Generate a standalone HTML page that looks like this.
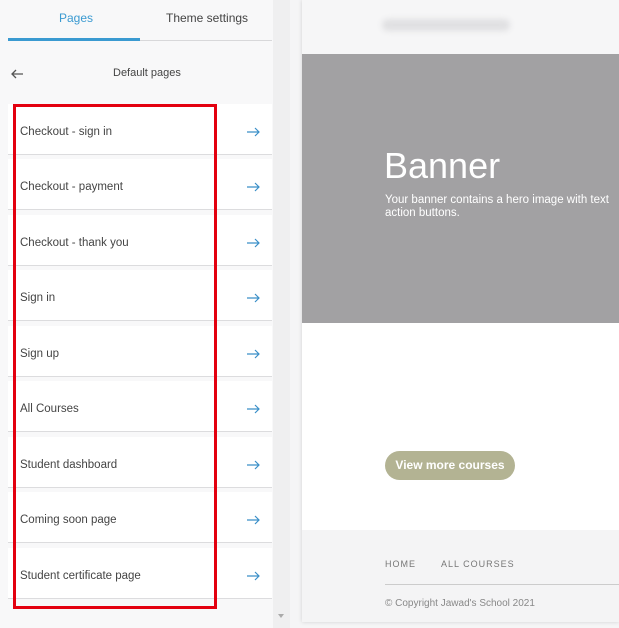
<!DOCTYPE html>
<html><head><style>
*{margin:0;padding:0;box-sizing:border-box}
body{width:619px;height:628px;overflow:hidden;background:#f5f5f6;font-family:"Liberation Sans",sans-serif;position:relative}
.left{position:absolute;left:0;top:0;width:273px;height:628px;background:#f8f8f9}
.tabs{position:absolute;left:8px;top:0;width:264px;height:41px;border-bottom:1px solid #d8d8da}
.tab{position:absolute;top:11px;font-size:12px;color:#444}
.ind{position:absolute;left:8px;top:38px;width:132px;height:3px;background:#3a9ad1}
.item{position:absolute;left:8px;width:264px;height:51px;background:#fff;border-bottom:1px solid #dcdcde}
.item span{position:absolute;left:12px;top:22px;font-size:11.5px;color:#444}
.item svg{position:absolute;left:238px;top:23px}
.scroll{position:absolute;left:273px;top:0;width:17px;height:628px;background:#efeff0}
.prev{position:absolute;left:302px;top:0;width:317px;height:622px;background:#fff;box-shadow:0 0 4px rgba(0,0,0,.15)}
</style></head><body>
<div class="left">
<div class="tabs"></div>
<div class="tab" style="left:59px;color:#3a9ad1">Pages</div>
<div class="tab" style="left:166px">Theme settings</div>
<div class="ind"></div>
<svg style="position:absolute;left:10px;top:68px" width="14" height="12"><path d="M13 6H2M6 2L2 6l4 4" stroke="#555" stroke-width="1.3" fill="none"/></svg>
<div style="position:absolute;left:113px;top:67px;font-size:11px;color:#444">Default pages</div>
</div>
<div class="scroll"></div>
<div style="position:absolute;left:278px;top:614px;border:3.5px solid transparent;border-top:4px solid #aaa"></div>

<div class="item" style="top:104px"><span>Checkout - sign in</span><svg width="14" height="10"><path d="M1 5h12M9 1l4 4-4 4" stroke="#3a8fc8" stroke-width="1.2" fill="none"/></svg></div>
<div class="item" style="top:159px"><span>Checkout - payment</span><svg width="14" height="10"><path d="M1 5h12M9 1l4 4-4 4" stroke="#3a8fc8" stroke-width="1.2" fill="none"/></svg></div>
<div class="item" style="top:215px"><span>Checkout - thank you</span><svg width="14" height="10"><path d="M1 5h12M9 1l4 4-4 4" stroke="#3a8fc8" stroke-width="1.2" fill="none"/></svg></div>
<div class="item" style="top:270px"><span>Sign in</span><svg width="14" height="10"><path d="M1 5h12M9 1l4 4-4 4" stroke="#3a8fc8" stroke-width="1.2" fill="none"/></svg></div>
<div class="item" style="top:326px"><span>Sign up</span><svg width="14" height="10"><path d="M1 5h12M9 1l4 4-4 4" stroke="#3a8fc8" stroke-width="1.2" fill="none"/></svg></div>
<div class="item" style="top:381px"><span>All Courses</span><svg width="14" height="10"><path d="M1 5h12M9 1l4 4-4 4" stroke="#3a8fc8" stroke-width="1.2" fill="none"/></svg></div>
<div class="item" style="top:437px"><span>Student dashboard</span><svg width="14" height="10"><path d="M1 5h12M9 1l4 4-4 4" stroke="#3a8fc8" stroke-width="1.2" fill="none"/></svg></div>
<div class="item" style="top:492px"><span>Coming soon page</span><svg width="14" height="10"><path d="M1 5h12M9 1l4 4-4 4" stroke="#3a8fc8" stroke-width="1.2" fill="none"/></svg></div>
<div class="item" style="top:548px"><span>Student certificate page</span><svg width="14" height="10"><path d="M1 5h12M9 1l4 4-4 4" stroke="#3a8fc8" stroke-width="1.2" fill="none"/></svg></div>

<div style="position:absolute;left:13px;top:104px;width:204px;height:505px;border:3px solid #e3000f"></div>

<div class="prev">
<div style="position:absolute;left:0;top:0;width:317px;height:54px;background:#f6f6f7"></div>
<div style="position:absolute;left:80px;top:19px;width:128px;height:12px;background:#e0e0e2;border-radius:6px;filter:blur(3px)"></div>
<div style="position:absolute;left:0;top:54px;width:317px;height:269px;background:#a2a1a3"></div>
<div style="position:absolute;left:82px;top:145px;font-size:36px;color:#fff;font-weight:300">Banner</div>
<div style="position:absolute;left:83px;top:194px;font-size:11.5px;color:#fff;line-height:13px;white-space:nowrap">Your banner contains a hero image with text<br>action buttons.</div>
<div style="position:absolute;left:83px;top:451px;width:130px;height:29px;border-radius:15px;background:#b3b393;color:#fff;font-size:12px;font-weight:bold;text-align:center;line-height:29px">View more courses</div>
<div style="position:absolute;left:0;top:530px;width:317px;height:92px;background:#f4f4f5"></div>
<div style="position:absolute;left:83px;top:559px;font-size:9px;color:#777;letter-spacing:1px">HOME</div>
<div style="position:absolute;left:139px;top:559px;font-size:9px;color:#777;letter-spacing:1px">ALL COURSES</div>
<div style="position:absolute;left:83px;top:584px;width:234px;height:1px;background:#ccc"></div>
<div style="position:absolute;left:83px;top:598px;font-size:10px;color:#888">© Copyright Jawad's School 2021</div>
</div>
</body></html>
